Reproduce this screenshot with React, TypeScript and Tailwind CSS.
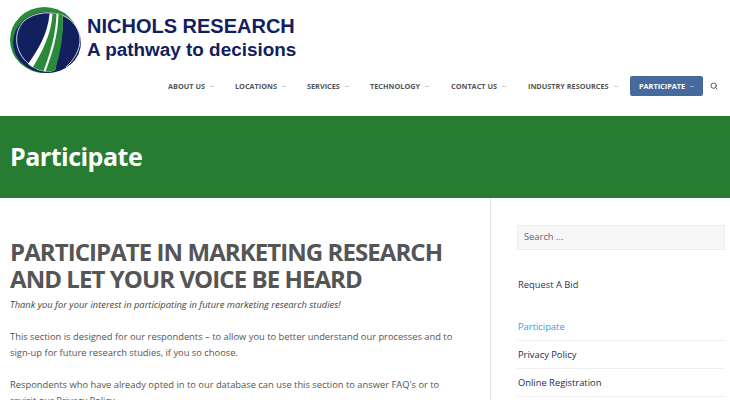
import React from "react";
import { Search } from "lucide-react";

const font = { fontFamily: '"Open Sans", sans-serif' };

function Logo() {
  return (
    <svg width="86" height="76" viewBox="0 0 86 76" className="shrink-0">
      <ellipse cx="44.500" cy="40" rx="34.500" ry="33" fill="#2a8a3a" />
      <ellipse cx="47" cy="42.500" rx="34" ry="30.500" fill="#13205f" />
      <path d="M29 64C14 52 13 32 24 21C34 12 52 10.500 64 16C74 21 80 30 80 40C80 50 74 60 66 67" fill="none" stroke="#ffffff" strokeWidth="0.8" />
      <path d="M49.500 13.500L62.500 14.500C64 36 58 56 55 70.500C47 73 38 72 28 64C38 50 48 34 49.500 13.500Z" fill="#ffffff" />
      <path d="M52.500 13.500L56.500 13.500C56 34 50 54 43.500 71C40 70.500 36 69 33 67C42 52 51.500 34 52.500 13.500Z" fill="#2a8a3a" />
      <path d="M58.500 14L62.500 14.500C64 36 60 54 55 70.500C52 71.500 48.500 71.800 45.500 71.500C52 54 58 36 58.500 14Z" fill="#2a8a3a" />
    </svg>
  );
}

function Caret() {
  return <span className="w-[4px] h-px bg-[#cfcfcf] ml-[5px] mt-px" />;
}

export default function App() {
  return (
    <div className="w-[730px] h-[400px] overflow-hidden bg-white text-[#555]" style={font}>
      <header className="h-[116px]">
        <div className="flex h-[76px]">
          <Logo />
          <div className="ml-px pt-[15px] text-[#13205f] font-bold whitespace-nowrap" style={{ fontFamily: '"Liberation Sans", sans-serif' }}>
            <div className="text-[20px] leading-[23px]">NICHOLS RESEARCH</div>
            <div className="text-[18.900px] leading-[23px]">A pathway to decisions</div>
          </div>
        </div>
        <nav className="flex items-center pl-[168px] h-[20px] text-[7.300px] font-bold text-[#555] whitespace-nowrap">
          <div className="flex items-center w-[67px]"><span>ABOUT US</span><Caret /></div>
          <div className="flex items-center w-[72px]"><span>LOCATIONS</span><Caret /></div>
          <div className="flex items-center w-[63px]"><span>SERVICES</span><Caret /></div>
          <div className="flex items-center w-[81px]"><span>TECHNOLOGY</span><Caret /></div>
          <div className="flex items-center w-[77px]"><span>CONTACT US</span><Caret /></div>
          <div className="flex items-center w-[102px]"><span>INDUSTRY RESOURCES</span><Caret /></div>
          <div className="flex items-center h-[20px] w-[73px] pl-[9px] rounded-[2px] bg-[#466a9c] text-white">
            <span>PARTICIPATE</span>
            <span className="w-[4px] h-px bg-[#8fa6c6] ml-[5px] mt-px" />
          </div>
          <Search size={8} strokeWidth={3} className="ml-[7px] text-[#555]" />
        </nav>
      </header>
      <section className="h-[82px] bg-[#267c30] flex items-center pl-[10px]">
        <h1 className="text-[25px] font-bold tracking-[-0.5px] text-white">Participate</h1>
      </section>
      <div className="flex h-[202px]">
        <main className="w-[491px] shrink-0 border-r border-[#e3e3e3] pl-[10px] pt-[40px]">
          <h2 className="text-[24px] leading-[27px] font-bold tracking-[-0.93px] text-[#555] whitespace-nowrap">
            PARTICIPATE IN MARKETING RESEARCH<br />AND LET YOUR VOICE BE HEARD
          </h2>
          <p className="mt-[5px] text-[9.350px] leading-[16px] italic text-[#444] whitespace-nowrap">
            Thank you for your interest in participating in future marketing research studies!
          </p>
          <p className="mt-[16px] text-[9.350px] leading-[16px] text-[#555] whitespace-nowrap">
            This section is designed for our respondents – to allow you to better understand our processes and to<br />
            sign-up for future research studies, if you so choose.
          </p>
          <p className="mt-[16px] text-[9.350px] leading-[16px] text-[#555] whitespace-nowrap">
            Respondents who have already opted in to our database can use this section to answer FAQ's or to<br />
            revisit our Privacy Policy.
          </p>
        </main>
        <aside className="flex-1 pl-[26px] pr-[5px] pt-[27px] text-[9.350px]">
          <div className="h-[25px] bg-[#f7f7f7] border border-[#ececec] flex items-center pl-[6px] text-[#666]">Search ...</div>
          <div className="mt-[27px] h-[16px] pl-px leading-[16px] text-[#2b3358]">Request A Bid</div>
          <ul className="mt-[20px] text-[#222b55]">
            <li className="h-[28px] pl-px leading-[16px] pt-[6px] border-b border-[#eeeeee] text-[#3f9ad6]">Participate</li>
            <li className="h-[28px] pl-px leading-[16px] pt-[6px] border-b border-[#eeeeee]">Privacy Policy</li>
            <li className="h-[28px] pl-px leading-[16px] pt-[6px] border-b border-[#eeeeee]">Online Registration</li>
          </ul>
        </aside>
      </div>
    </div>
  );
}
